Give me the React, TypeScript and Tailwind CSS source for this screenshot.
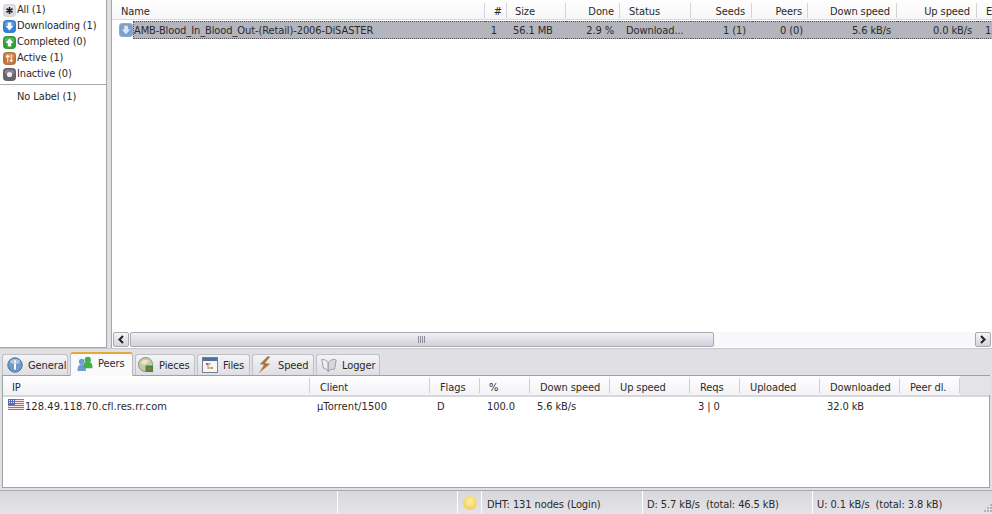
import React from "react";

const Sq = ({ fill, edge, children }: { fill: string; edge: string; children?: React.ReactNode }) => (
  <svg width="13" height="13" viewBox="0 0 15 15" className="shrink-0">
    <rect x="0.500" y="0.500" width="14" height="14" rx="3.500" fill={fill} stroke={edge} />
    <rect x="2" y="2" width="11" height="5" rx="2" fill="#ffffff" opacity="0.22" />
    {children}
  </svg>
);

const filters: [string, React.ReactNode][] = [
  ["All (1)", <Sq fill="#dcdce0" edge="#d0d0d4"><path d="M7.500 3.500v8M4 5.500l7 4M11 5.500l-7 4" stroke="#222" strokeWidth="1.800" /></Sq>],
  ["Downloading (1)", <Sq fill="#2f86d8" edge="#2a70b8"><path d="M5.500 3h4v4h2.500L7.500 12 3 7h2.500z" fill="#fff" /></Sq>],
  ["Completed (0)", <Sq fill="#2ea336" edge="#208a2c"><path d="M5.500 12h4V8H12L7.500 3 3 8h2.500z" fill="#fff" /></Sq>],
  ["Active (1)", <Sq fill="#c4763a" edge="#a4642f"><path d="M5 12V6H3l2.500-3L8 6H6v6zM10 3v6h2l-2.500 3L7 9h2V3z" fill="#fff" /></Sq>],
  ["Inactive (0)", <Sq fill="#6a6470" edge="#565058"><circle cx="7.500" cy="7.500" r="3" fill="#eee" /></Sq>],
];

const Flag = () => (
  <svg width="16" height="11" viewBox="0 0 16 11" className="shrink-0">
    <rect width="16" height="11" fill="#f8e4e4" />
    <path d="M0 .5h16M0 2.500h16M0 4.500h16M0 6.500h16M0 8.500h16M0 10.500h16" stroke="#d8585c" />
    <rect width="7" height="6" fill="#5a6cb0" />
    <path d="M1 1.500h5M1 3.500h5" stroke="#e4e8f4" strokeDasharray="1 1" />
  </svg>
);

const tabIcons: Record<string, React.ReactNode> = {
  General: (
    <svg width="16" height="16" viewBox="0 0 16 16">
      <circle cx="8" cy="8" r="7.200" fill="#6e9cc8" stroke="#47709c" />
      <ellipse cx="8" cy="4.500" rx="5" ry="2.500" fill="#c4d8ea" opacity="0.7" />
      <rect x="7" y="6.500" width="2" height="6" fill="#fff" />
      <rect x="7" y="3.500" width="2" height="2" fill="#fff" />
    </svg>
  ),
  Peers: (
    <svg width="16" height="16" viewBox="0 0 17 17">
      <circle cx="5" cy="6" r="3" fill="#6f9bd8" />
      <path d="M0.500 16c0-5 1.500-7 4.500-7s4.500 2 4.500 7z" fill="#6f9bd8" />
      <circle cx="11.500" cy="4" r="3.300" fill="#3fb04a" />
      <path d="M6.500 13c0-6 2-7 5-7s5 1 5 7z" fill="#3fb04a" />
    </svg>
  ),
  Pieces: (
    <svg width="16" height="16" viewBox="0 0 17 17">
      <circle cx="8" cy="8" r="7.500" fill="#c9c9a4" stroke="#8c8c78" />
      <path d="M3 6c2-4 7-4 9-1-2 0-3 1-3 3-3 0-4 0-6-2z" fill="#e8e4d0" />
      <path d="M8 9h8v7H8z" fill="#3f8a48" />
      <path d="M10 11h4v3h-4z" fill="#b5643c" />
    </svg>
  ),
  Files: (
    <svg width="16" height="16" viewBox="0 0 16 16">
      <rect x="0.500" y="0.500" width="15" height="15" fill="#f6f6f8" stroke="#76808e" />
      <rect x="1" y="1" width="14" height="3" fill="#4f6f9c" />
      <path d="M6 7h3M6 11h3M6 6v6" stroke="#b08a5c" />
      <rect x="4" y="6" width="2" height="2" fill="#c05a4c" />
      <rect x="9" y="10" width="2" height="2" fill="#c09a4c" />
    </svg>
  ),
  Speed: (
    <svg width="16" height="18" viewBox="0 0 16 18">
      <path d="M11 0 3 8l4 1-5 8 11-9-5-1 5-6z" fill="#a8743c" stroke="#c9b18c" strokeWidth="0.600" />
    </svg>
  ),
  Logger: (
    <svg width="16" height="16" viewBox="0 0 20 18">
      <path d="M1 2c3 0 6 1 8 4v11c-2-3-4-4-6-4z" fill="#f0f0f0" stroke="#8a8a92" />
      <path d="M16 2c1 0 2 0 3 1l-2 11c-3 0-6 1-8 3V6c2-2 4-4 7-4z" fill="#d8d8dc" stroke="#8a8a92" />
    </svg>
  ),
};

const tabs = [
  { n: "General", w: "w-[66px] pl-[4px]" },
  { n: "Peers", w: "w-[63px] pl-[6px]" },
  { n: "Pieces", w: "w-[60px] pl-[2px]" },
  { n: "Files", w: "w-[53px] pl-[4px]" },
  { n: "Speed", w: "w-[62px] pl-[4px]" },
  { n: "Logger", w: "w-[64px] pl-[4px]" },
];

const Arrow = ({ left }: { left?: boolean }) => (
  <div className="w-[16px] h-[15px] shrink-0 flex items-center justify-center rounded-[2px] border border-[#a8aab0] bg-gradient-to-b from-[#f4f4f8] to-[#d4d4dc]">
    <svg width="8" height="9" viewBox="0 0 8 9">
      <path d={left ? "M6 1 2.500 4.500 6 8" : "M2 1l3.500 3.500L2 8"} fill="none" stroke="#222" strokeWidth="2" />
    </svg>
  </div>
);

const topHead: [string, string][] = [
  ["Name", "text-left pl-[9px]"],
  ["#", "text-right pr-[4px]"],
  ["Size", "text-left pl-[8px]"],
  ["Done", "text-right pr-[5px]"],
  ["Status", "text-left pl-[9px]"],
  ["Seeds", "text-right pr-[6px]"],
  ["Peers", "text-right pr-[5px]"],
  ["Down speed", "text-right pr-[6px]"],
  ["Up speed", "text-right pr-[6px]"],
  ["E", "text-left pl-[9px]"],
];
const topRow: [string, string][] = [
  ["1", "text-right pr-[10px]"],
  ["56.1 MB", "text-left pl-[6px]"],
  ["2.9 %", "text-right pr-[6px]"],
  ["Download...", "text-left pl-[6px]"],
  ["1 (1)", "text-right pr-[6px]"],
  ["0 (0)", "text-right pr-[5px]"],
  ["5.6 kB/s", "text-right pr-[6px]"],
  ["0.0 kB/s", "text-right pr-[5px]"],
  ["17", "text-left pl-[8px]"],
];
const botHead: [string, string][] = [
  ["IP", "pl-[9px]"],
  ["Client", "pl-[10px]"],
  ["Flags", "pl-[10px]"],
  ["%", "pl-[9px]"],
  ["Down speed", "pl-[10px]"],
  ["Up speed", "pl-[10px]"],
  ["Reqs", "pl-[10px]"],
  ["Uploaded", "pl-[10px]"],
  ["Downloaded", "pl-[10px]"],
  ["Peer dl.", "pl-[10px]"],
];

const topCols = "grid-cols-[373px_22px_59px_54px_71px_61px_56px_89px_80px_16px]";
const botCols = "grid-cols-[307px_120px_50px_50px_80px_80px_50px_80px_80px_60px_30px]";

export default function App() {
  return (
    <div className="w-[992px] h-[514px] overflow-hidden flex flex-col bg-[#dfdfe4] text-[11px] leading-[16px] tracking-[-0.1px] text-[#2a2a2a] font-['DejaVu_Sans_Condensed','DejaVu_Sans',sans-serif]">
      <div className="flex h-[348px] shrink-0">
        <aside className="w-[107px] shrink-0 bg-white border-r border-b border-[#a4a6a8] pt-[2px]">
          <ul>
            {filters.map(([label, icon]) => (
              <li key={label} className="h-[16px] flex items-center pl-[3px] gap-px whitespace-nowrap tracking-[-0.15px]">
                {icon}
                <span>{label}</span>
              </li>
            ))}
          </ul>
          <div className="mt-[2px] border-t border-[#a8aaac] pl-[17px] pt-[4px]">No Label (1)</div>
        </aside>
        <div className="w-[4px] shrink-0 bg-[#dfdfe4]" />
        <main className="flex-1 min-w-0 flex flex-col bg-white border-l border-[#a4a6a8]">
          <div className={`grid ${topCols} h-[20px] pt-[2px] shrink-0 items-center bg-gradient-to-b from-white to-[#f6f6f8] border-b border-[#dcdce0] overflow-hidden`}>
            {topHead.map(([t, c], i) => (
              <div key={t} className={`whitespace-nowrap h-[15px] leading-[17px] ${c} ${i < 9 ? "border-r border-[#d4d4d8]" : ""}`}>
                {t}
              </div>
            ))}
          </div>
          <div className={`grid ${topCols} h-[18px] mt-px shrink-0 items-center`}>
            <div className="flex items-center h-[18px] pl-[7px] whitespace-nowrap">
              <svg width="14" height="14" viewBox="0 0 15 15" className="shrink-0">
                <rect x="0.500" y="0.500" width="14" height="14" rx="3" fill="#7d9fd0" stroke="#8ca4c8" />
                <path d="M5.500 3h4v4h2.500L7.500 12 3 7h2.500z" fill="#dde6f4" />
              </svg>
              <div className="flex-1 h-[18px] leading-[18px] bg-[#b4b4bc] border-y border-l border-dotted border-[#55555c]">
                AMB-Blood_In_Blood_Out-(Retail)-2006-DiSASTER
              </div>
            </div>
            {topRow.map(([t, c], i) => (
              <div key={i} className={`bg-[#b4b4bc] h-[18px] leading-[18px] whitespace-nowrap overflow-hidden border-y border-dotted border-[#55555c] ${c}`}>
                {t}
              </div>
            ))}
          </div>
          <div className="flex-1" />
          <div className="flex items-center h-[17px] shrink-0 px-px">
            <Arrow left />
            <div className="flex-1 h-[15px] flex bg-[#f8f8fa] pl-px">
              <div className="w-[584px] h-[15px] flex items-center justify-center rounded-[2px] border border-[#a8aab0] bg-gradient-to-b from-[#f0f0f6] to-[#d2d2dc]">
                <span className="w-[8px] h-[7px] bg-[repeating-linear-gradient(90deg,#8c8c98_0,#8c8c98_1px,transparent_1px,transparent_2px)]" />
              </div>
            </div>
            <Arrow />
          </div>
        </main>
      </div>

      <div className="h-[4px] shrink-0 border-t border-[#c8c8cc]" />

      <div className="flex items-end h-[23px] shrink-0 pl-[2px] gap-[2px] relative z-10">
        {tabs.map(({ n, w }) => {
          const active = n === "Peers";
          return (
            <div
              key={n}
              className={
                active
                  ? `${w} h-[24px] -mb-px pb-[3px] flex items-center gap-[5px] rounded-t-[3px] bg-[#fafafc] border-x border-[#b8bac0] border-t-2 border-t-[#e8a838]`
                  : `${w} h-[21px] flex items-center gap-[5px] rounded-t-[3px] bg-gradient-to-b from-[#f4f4f6] to-[#dedee4] border-x border-t border-[#c0c2c8]`
              }
            >
              <span className="w-[16px] flex justify-center shrink-0">{tabIcons[n]}</span>
              <span className={active ? "" : "pt-[2px]"}>{n}</span>
            </div>
          );
        })}
      </div>

      <section className="h-[113px] shrink-0 mx-[2px] bg-white border border-[#9aa4a0] flex flex-col">
        <div className={`grid ${botCols} h-[21px] shrink-0 items-center bg-gradient-to-b from-white to-[#f2f2f6] border-b-2 border-[#d8d8dc]`}>
          {botHead.map(([t, c]) => (
            <div key={t} className={`h-[15px] leading-[19px] whitespace-nowrap border-r border-[#d0d0d4] ${c}`}>
              {t}
            </div>
          ))}
          <div className="h-[19px] bg-[#e4e4e8]" />
        </div>
        <div className={`grid ${botCols} h-[18px] pt-[2px] items-center whitespace-nowrap`}>
          <div className="flex items-center pl-[5px] gap-px tracking-[0.08px]"><span className="-mt-[6px]"><Flag /></span>128.49.118.70.cfl.res.rr.com</div>
          <div className="pl-[7px] tracking-[0.08px]">µTorrent/1500</div>
          <div className="pl-[7px]">D</div>
          <div className="pl-[7px]">100.0</div>
          <div className="pl-[7px]">5.6 kB/s</div>
          <div />
          <div className="pl-[8px]">3 | 0</div>
          <div />
          <div className="pl-[7px]">32.0 kB</div>
          <div />
        </div>
      </section>

      <footer className="flex flex-1 mt-[2px] border-t border-[#a8aaac] items-stretch whitespace-nowrap bg-gradient-to-b from-[#d8d8dc] to-[#e4e4e8] relative">
        <div className="w-[338px] border-r border-white" />
        <div className="w-[120px] border-r border-white" />
        <div className="w-[24px] border-r border-white flex items-center justify-center">
          <span className="w-[14px] h-[14px] rounded-full bg-[radial-gradient(circle_at_50%_40%,#fff0a8,#f0c040)]" />
        </div>
        <div className="w-[161px] border-r border-white pl-[5px] pt-[4px] flex items-center">DHT: 131 nodes (Login)</div>
        <div className="w-[170px] border-r border-white pl-[4px] pt-[4px] flex items-center">D: 5.7 kB/s&nbsp; (total: 46.5 kB)</div>
        <div className="flex-1 pl-[4px] pt-[4px] flex items-center">U: 0.1 kB/s&nbsp; (total: 3.8 kB)</div>
        <svg width="10" height="10" viewBox="0 0 10 10" className="absolute right-0 bottom-0">
          <path d="M8 1h2M5 4h2M8 4h2M2 7h2M5 7h2M8 7h2" stroke="#b4b4b8" strokeWidth="2" />
        </svg>
      </footer>
    </div>
  );
}
